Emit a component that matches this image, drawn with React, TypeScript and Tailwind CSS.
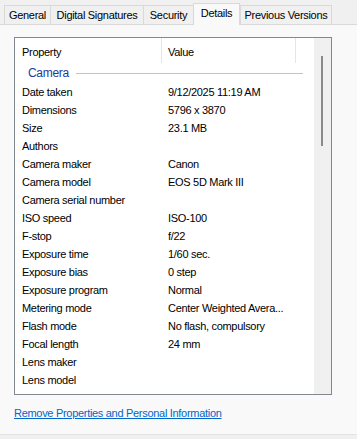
const tabs: [string, string][] = [
  ["General", "w-[46px]"],
  ["Digital Signatures", "w-[93px]"],
  ["Security", "w-[50px]"],
  ["Details", "w-[47px]"],
  ["Previous Versions", "w-[92px]"],
];

const rows: [string, string][] = [
  ["Date taken", "9/12/2025 11:19 AM"],
  ["Dimensions", "5796 x 3870"],
  ["Size", "23.1 MB"],
  ["Authors", ""],
  ["Camera maker", "Canon"],
  ["Camera model", "EOS 5D Mark III"],
  ["Camera serial number", ""],
  ["ISO speed", "ISO-100"],
  ["F-stop", "f/22"],
  ["Exposure time", "1/60 sec."],
  ["Exposure bias", "0 step"],
  ["Exposure program", "Normal"],
  ["Metering mode", "Center Weighted Avera..."],
  ["Flash mode", "No flash, compulsory"],
  ["Focal length", "24 mm"],
  ["Lens maker", ""],
  ["Lens model", ""],
];

export default function App() {
  return (
    <div className="flex h-[439px] w-[357px] flex-col overflow-hidden bg-[#f0f0f0] text-[11px] tracking-[-0.3px] text-black [font-family:'Liberation_Sans',Arial,sans-serif]">
      {/* tab strip */}
      <div className="flex h-[24px] shrink-0 items-end pl-[4px]">
        {tabs.map(([t, w]) =>
          t === "Details" ? (
            <div
              key={t}
              className={`relative z-10 -mb-px flex h-[22px] items-center justify-center whitespace-nowrap border border-b-0 border-[#d9d9d9] bg-[#f9f9f9] pb-[3px] ${w}`}
            >
              {t}
            </div>
          ) : (
            <div
              key={t}
              className={`flex h-[19px] items-center justify-center whitespace-nowrap border border-b-0 border-r-0 border-[#d9d9d9] last:border-r ${w}`}
            >
              {t}
            </div>
          )
        )}
      </div>

      {/* panel */}
      <div className="flex flex-1 flex-col border-t border-[#d9d9d9] bg-[#f9f9f9] px-[14px] pt-[12px]">
        <div className="flex h-[358px] w-[318px] border border-[#828790] bg-white">
          <div className="flex flex-1 flex-col">
            <div className="flex h-[25px] items-center">
              <div className="flex h-full w-[147px] items-center border-r border-[#e5e5e5] pl-[7px] pt-[3px]">
                Property
              </div>
              <div className="flex h-full w-[134px] items-center border-r border-[#e5e5e5] pl-[6px] pt-[3px]">
                Value
              </div>
            </div>
            <div className="flex h-[20px] items-center pl-[13px] pr-[11px]">
              <span className="text-[12px] text-[#1e3c96]">Camera</span>
              <div className="ml-[7px] h-px flex-1 bg-[#b9c3d9]" />
            </div>
            {rows.map(([k, v]) => (
              <div key={k} className="flex h-[18px] items-center">
                <div className="w-[147px] pl-[7px]">{k}</div>
                <div className="pl-[6px]">{v}</div>
              </div>
            ))}
          </div>
          <div className="w-[17px] bg-[#f0f0f0] pt-[18px]">
            <div className="ml-[7px] h-[90px] w-[2px] bg-[#8a8a8a]" />
          </div>
        </div>

        <a href="#" className="mt-[10px] w-fit text-[#0066cc] underline">
          Remove Properties and Personal Information
        </a>
      </div>

      <div className="h-[5px] shrink-0 border-t border-[#e3e3e3] bg-[#f0f0f0]" />
    </div>
  );
}
